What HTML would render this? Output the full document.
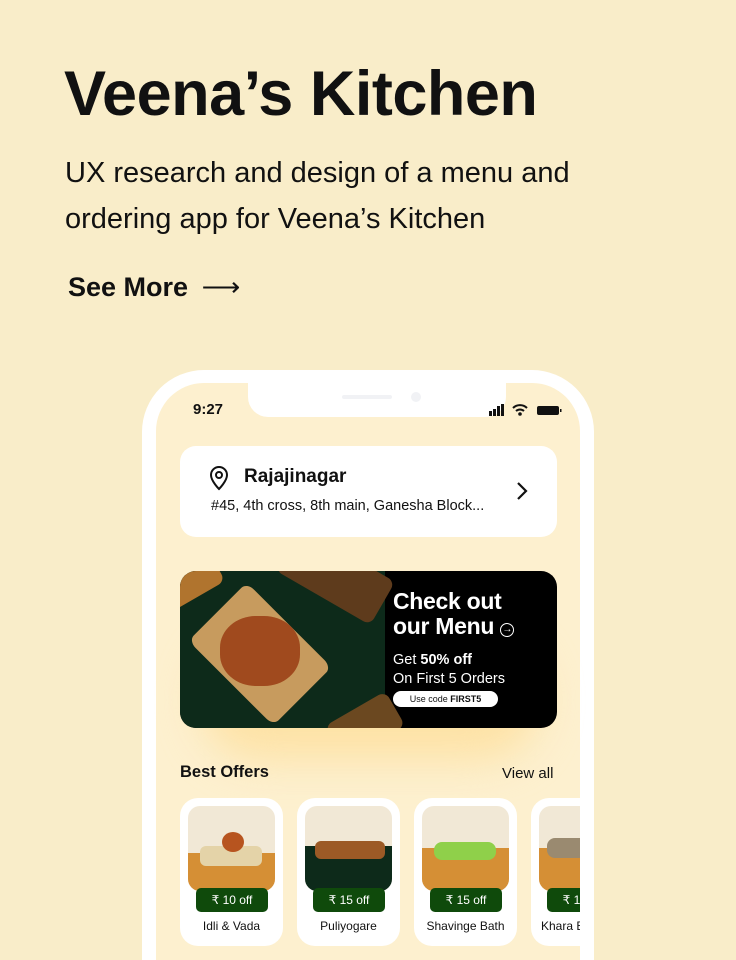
<!DOCTYPE html>
<html><head><meta charset="utf-8"><style>
*{margin:0;padding:0;box-sizing:border-box}
html,body{width:736px;height:960px;overflow:hidden}
body{background:#f9edc9;font-family:"Liberation Sans",sans-serif;position:relative;color:#111}
.abs{position:absolute}
h1{position:absolute;left:64px;top:58px;font-size:63px;font-weight:700;letter-spacing:-0.5px}
.sub{position:absolute;left:65px;top:150px;font-size:29px;line-height:46px;color:#111}
.see{position:absolute;left:68px;top:272px;font-size:27px;font-weight:700}
.phone{position:absolute;left:142px;top:370px;width:452px;height:590px;background:#fff;border-radius:62px 62px 0 0}
.screen{position:absolute;left:156px;top:383px;width:424px;height:577px;background:#fdf0cf;border-radius:48px 48px 0 0;overflow:hidden}
.notch{position:absolute;left:248px;top:383px;width:258px;height:34px;background:#fff;border-radius:0 0 20px 20px}
.card{position:absolute;background:#fff;border-radius:16px}
.offer{position:absolute;top:8px;width:103px;height:148px;background:#fff;border-radius:18px}
.img{position:absolute;left:8px;top:8px;width:87px;height:85px;border-radius:12px;overflow:hidden;background:#f1e8d6}
.tag{position:absolute;left:16px;top:90px;width:72px;height:24px;background:#0f4a0b;color:#fff;border-radius:5px;font-size:12px;text-align:center;line-height:24px}
.nm{position:absolute;top:121px;width:103px;text-align:center;font-size:12px}
</style></head><body>
<h1>Veena’s Kitchen</h1>
<div class="sub">UX research and design of a menu and<br>ordering app for Veena’s Kitchen</div>
<div class="see">See More <span style="font-weight:400;margin-left:6px">⟶</span></div>
<div class="phone"></div>
<div class="screen"></div>
<div class="abs" style="left:200px;top:640px;width:340px;height:120px;border-radius:60px;background:#fde2a6;filter:blur(20px)"></div>
<div class="notch"></div>
<div class="abs" style="left:342px;top:395px;width:50px;height:4px;background:#f1f2f5;border-radius:2px"></div>
<div class="abs" style="left:411px;top:392px;width:10px;height:10px;background:#f1f2f5;border-radius:50%"></div>
<div class="abs" style="left:193px;top:401px;font-size:15px;font-weight:700">9:27</div>
<svg class="abs" style="left:488px;top:403px" width="76" height="14"><rect x="1" y="8" width="3" height="5" fill="#111"/><rect x="5" y="6" width="3" height="7" fill="#111"/><rect x="9" y="3" width="3" height="10" fill="#111"/><rect x="13" y="1" width="3" height="12" fill="#111"/><path d="M25 5a10 10 0 0 1 14 0M28 8a6 6 0 0 1 8 0" stroke="#111" stroke-width="2" fill="none"/><circle cx="32" cy="11" r="1.8" fill="#111"/><rect x="49" y="3" width="22" height="9" rx="2" fill="#111"/><rect x="72" y="6" width="1.5" height="3" fill="#111"/></svg>
<div class="card" style="left:180px;top:446px;width:377px;height:91px"></div>
<svg class="abs" style="left:208px;top:465px" width="22" height="26"><path d="M11 24s8-8 8-14a8 8 0 0 0-16 0c0 6 8 14 8 14z" stroke="#111" stroke-width="2" fill="none"/><circle cx="11" cy="10" r="3" stroke="#111" stroke-width="2" fill="none"/></svg>
<div class="abs" style="left:244px;top:466px;font-size:19px;font-weight:700">Rajajinagar</div>
<div class="abs" style="left:211px;top:498px;font-size:14.5px">#45, 4th cross, 8th main, Ganesha Block...</div>
<svg class="abs" style="left:515px;top:481px" width="14" height="20"><path d="M3 2l8 8-8 8" stroke="#111" stroke-width="2.2" fill="none"/></svg>
<div class="abs" style="left:180px;top:571px;width:377px;height:157px;border-radius:16px;background:#000;overflow:hidden">
 <div class="abs" style="left:0;top:0;width:205px;height:157px;background:#0d2a1a"></div>
 <div class="abs" style="left:20px;top:28px;width:120px;height:110px;background:#c79b5e;transform:rotate(45deg) scaleY(.75);border-radius:10px"></div>
 <div class="abs" style="left:40px;top:45px;width:80px;height:70px;background:#a04a1e;border-radius:45%"></div>
 <div class="abs" style="left:-30px;top:-10px;width:70px;height:40px;background:#b0742e;transform:rotate(-30deg);border-radius:8px"></div>
 <div class="abs" style="left:100px;top:-20px;width:110px;height:50px;background:#5e3b1c;transform:rotate(30deg);border-radius:8px"></div>
 <div class="abs" style="left:150px;top:135px;width:70px;height:40px;background:#6b4820;transform:rotate(-30deg);border-radius:8px"></div>
</div>
<div class="abs" style="left:393px;top:589px;color:#fff;font-size:23px;font-weight:700;line-height:25px;letter-spacing:-.3px">Check out<br>our Menu <span style="display:inline-block;width:14px;height:14px;border:1.5px solid #fff;border-radius:50%;font-size:10px;line-height:11px;text-align:center;vertical-align:2px">→</span></div>
<div class="abs" style="left:393px;top:651px;color:#fff;font-size:14.5px;line-height:19px">Get <b>50% off</b><br>On First 5 Orders</div>
<div class="abs" style="left:393px;top:691px;width:105px;height:16px;background:#fff;border-radius:8px;font-size:9px;text-align:center;line-height:16px">Use code <b>FIRST5</b></div>
<div class="abs" style="left:180px;top:763px;font-size:16.5px;font-weight:700">Best Offers</div>
<div class="abs" style="left:502px;top:765px;font-size:15px">View all</div>
<div class="abs" style="left:156px;top:790px;width:424px;height:170px;overflow:hidden">
<div class="offer" style="left:24px"><div class="img"><div class="abs" style="left:0;top:47px;width:87px;height:38px;background:#d58f35"></div><div class="abs" style="left:12px;top:40px;width:62px;height:20px;background:#e4d3a8;border-radius:6px"></div><div class="abs" style="left:34px;top:26px;width:22px;height:20px;background:#b7541f;border-radius:50%"></div></div><div class="tag">₹ 10 off</div><div class="nm">Idli &amp; Vada</div></div>
<div class="offer" style="left:141px"><div class="img"><div class="abs" style="left:0;top:40px;width:87px;height:45px;background:#0d2a1a"></div><div class="abs" style="left:10px;top:35px;width:70px;height:18px;background:#9c5a26;border-radius:6px"></div></div><div class="tag">₹ 15 off</div><div class="nm">Puliyogare</div></div>
<div class="offer" style="left:258px"><div class="img"><div class="abs" style="left:0;top:42px;width:87px;height:43px;background:#d58f35"></div><div class="abs" style="left:12px;top:36px;width:62px;height:18px;background:#8fd04a;border-radius:8px"></div></div><div class="tag">₹ 15 off</div><div class="nm">Shavinge Bath</div></div>
<div class="offer" style="left:375px"><div class="img"><div class="abs" style="left:0;top:42px;width:87px;height:43px;background:#d58f35"></div><div class="abs" style="left:8px;top:32px;width:62px;height:20px;background:#9a8a70;border-radius:8px"></div></div><div class="tag">₹ 10 off</div><div class="nm" style="text-align:left;left:10px">Khara Bath</div></div>
</div>
</body></html>
